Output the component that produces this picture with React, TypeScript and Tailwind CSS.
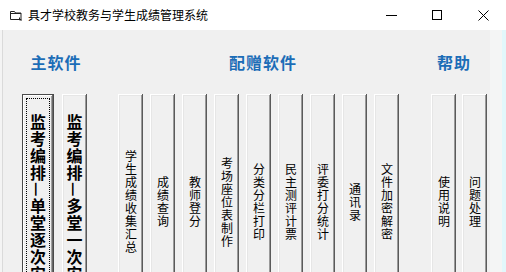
import type { ReactNode } from "react";

type BtnProps = {
  text: string;
  big?: boolean;
  isDefault?: boolean;
};

const VBtn = ({ text, big, isDefault }: BtnProps) => {
  return (
    <div
      className={
        "relative shrink-0 flex items-center justify-center bg-[#f0f0f0] " +
        (isDefault
          ? "w-[32px] h-[226px] border border-[#4a4a4a] shadow-[inset_-1px_-1px_#696969,inset_1px_1px_#ffffff,inset_-2px_-2px_#a0a0a0]"
          : big
          ? "w-[25px] h-[226px] shadow-[inset_-1px_-1px_#5a5a5a,inset_1px_1px_#ffffff,inset_-2px_-2px_#9a9a9a,inset_2px_2px_#e6e6e6]"
          : "w-[25px] h-[216px] shadow-[inset_-1px_-1px_#5a5a5a,inset_1px_1px_#ffffff,inset_-2px_-2px_#9a9a9a,inset_2px_2px_#e6e6e6]")
      }
    >
      {isDefault && (
        <div className="absolute inset-[3px] border border-dotted border-black" />
      )}
      <span
        className={
          "[writing-mode:vertical-rl] leading-none text-black " +
          (big
            ? "text-[16px] font-bold tracking-[1px]"
            : "text-[12px] tracking-[1px]")
        }
      >
        {text}
      </span>
    </div>
  );
};

const Group = ({
  title,
  titleClass,
  children,
  className,
}: {
  title: string;
  titleClass?: string;
  children: ReactNode;
  className?: string;
}) => (
  <div className={"flex flex-col items-center " + (className ?? "")}>
    <h2
      className={
        "h-[20px] leading-[20px] text-[16px] font-bold tracking-[1px] text-[#1c6db7] mb-[22px] " +
        (titleClass ?? "")
      }
    >
      {title}
    </h2>
    {children}
  </div>
);

const AppIcon = () => (
  <svg width="14" height="12" viewBox="0 0 14 12" fill="none" stroke="#222" strokeWidth="1">
    <path d="M1.5 2.5h4l1 1.5h5.5v6.5h-10.5z" />
    <path d="M1.5 4.5h10.5" />
    <path d="M10.5 8.5v2.5h2.5" />
  </svg>
);

export default function App() {
  const extras = [
    "学生成绩收集汇总",
    "成绩查询",
    "教师登分",
    "考场座位表制作",
    "分类分栏打印",
    "民主测评计票",
    "评委打分统计",
    "通讯录",
    "文件加密解密",
  ];
  const help = ["使用说明", "问题处理"];

  return (
    <div className="w-[506px] h-[272px] overflow-hidden flex flex-col bg-white font-['Noto_Sans_CJK_SC','Microsoft_YaHei',sans-serif]">
      <header className="h-[30px] shrink-0 flex items-center bg-white">
        <div className="pl-[9px] pr-[5px] flex items-center">
          <AppIcon />
        </div>
        <span className="text-[12px] text-black leading-none">
          具才学校教务与学生成绩管理系统
        </span>
        <div className="ml-auto flex h-full">
          <div className="w-[46px] h-full flex items-center justify-center">
            <div className="w-[11px] h-px bg-black" />
          </div>
          <div className="w-[46px] h-full flex items-center justify-center">
            <div className="w-[10px] h-[10px] border border-black" />
          </div>
          <div className="w-[46px] h-full flex items-center justify-center">
            <svg width="11" height="11" viewBox="0 0 11 11" stroke="#000" strokeWidth="1">
              <path d="M0.5 0.5l10 10M10.5 0.5l-10 10" />
            </svg>
          </div>
        </div>
      </header>

      <div className="flex-1 flex bg-[#f0f0f0] overflow-hidden">
        <div className="w-[3px] shrink-0 border-r border-[#dadada] bg-[#f4f4f4]" />
        <main className="flex-1 flex items-start pt-[22px] pl-[19px]">
          <Group title="主软件" titleClass="pl-[3px]">
            <div className="flex gap-[8px]">
              <VBtn text="监考编排—单堂逐次安排" big isDefault />
              <VBtn text="监考编排—多堂一次安排" big />
            </div>
          </Group>

          <Group title="配赠软件" titleClass="pl-[9px]" className="ml-[31px]">
            <div className="flex gap-[7px]">
              {extras.map((t) => (
                <VBtn key={t} text={t} />
              ))}
            </div>
          </Group>

          <Group title="帮助" titleClass="pr-[10px]" className="ml-[32px]">
            <div className="flex gap-[6px]">
              {help.map((t) => (
                <VBtn key={t} text={t} />
              ))}
            </div>
          </Group>
        </main>
        <div className="w-[12px] shrink-0 bg-[#f4f5f5]" />
        <div className="w-[4px] shrink-0 bg-[#e2f7fb]" />
      </div>
    </div>
  );
}
